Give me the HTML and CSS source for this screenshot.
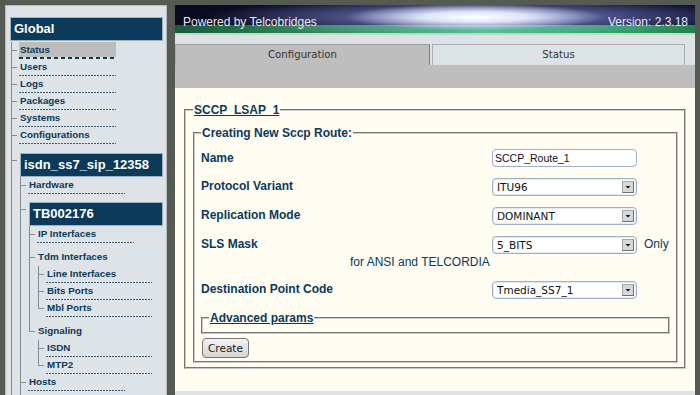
FILE: index.html
```html
<!DOCTYPE html>
<html lang="en">
<head>
    <meta charset="UTF-8">
    <meta name="viewport" content="width=device-width, initial-scale=1.0">
    <title>SCCP Route - Telcobridges</title>
    <link rel="stylesheet" href="styles.css">
</head>
<body>
    <div class="page">
        <nav class="sidebar">
            <div class="node-title">Global</div>
            <ul class="tree top">
                <li><a href="#" class="current">Status</a></li>
                <li><a href="#">Users</a></li>
                <li><a href="#">Logs</a></li>
                <li><a href="#">Packages</a></li>
                <li><a href="#">Systems</a></li>
                <li><a href="#">Configurations</a></li>
                <li class="node open">
                    <div class="node-title">isdn_ss7_sip_12358</div>
                    <ul class="tree">
                        <li><a href="#">Hardware</a></li>
                        <li class="node sub">
                            <div class="node-title">TB002176</div>
                            <ul class="tree">
                                <li><a href="#">IP Interfaces</a></li>
                                <li class="branch">
                                    <span class="branch-label">Tdm Interfaces</span>
                                    <ul class="tree wide">
                                        <li><a href="#">Line Interfaces</a></li>
                                        <li><a href="#">Bits Ports</a></li>
                                        <li><a href="#">Mbl Ports</a></li>
                                    </ul>
                                </li>
                                <li class="branch">
                                    <span class="branch-label">Signaling</span>
                                    <ul class="tree wide">
                                        <li><a href="#">ISDN</a></li>
                                        <li><a href="#">MTP2</a></li>
                                    </ul>
                                </li>
                            </ul>
                        </li>
                        <li class="open"><a href="#">Hosts</a></li>
                    </ul>
                </li>
            </ul>
        </nav>

        <main class="main">
            <header class="banner">
                <span>Powered by Telcobridges</span>
                <span>Version: 2.3.18</span>
            </header>
            <div class="tabs">
                <a href="#" class="tab active">Configuration</a>
                <a href="#" class="tab">Status</a>
            </div>
            <div class="toolbar"></div>
            <div class="content">
                <fieldset class="group">
                    <legend><a href="#">SCCP_LSAP_1</a></legend>
                    <fieldset class="group">
                        <legend>Creating New Sccp Route:</legend>
                        <form id="route-form">
                            <div class="row first">
                                <label for="name">Name</label>
                                <div class="control">
                                    <input type="text" id="name" name="name" value="SCCP_Route_1">
                                </div>
                            </div>
                            <div class="row">
                                <label for="variant">Protocol Variant</label>
                                <div class="control">
                                    <span class="select">
                                        <select id="variant" name="variant">
                                            <option>ITU96</option>
                                            <option>ANSI88</option>
                                        </select>
                                        <span class="arrow"><svg width="10" height="10" viewBox="0 0 10 10"><polygon points="2.5,4 7.5,4 5,6.5" fill="#111"/></svg></span>
                                    </span>
                                </div>
                            </div>
                            <div class="row">
                                <label for="replication">Replication Mode</label>
                                <div class="control">
                                    <span class="select">
                                        <select id="replication" name="replication">
                                            <option>DOMINANT</option>
                                            <option>LOADSHARE</option>
                                        </select>
                                        <span class="arrow"><svg width="10" height="10" viewBox="0 0 10 10"><polygon points="2.5,4 7.5,4 5,6.5" fill="#111"/></svg></span>
                                    </span>
                                </div>
                            </div>
                            <div class="row">
                                <label for="sls">SLS Mask</label>
                                <div class="control">
                                    <span class="select">
                                        <select id="sls" name="sls">
                                            <option>5_BITS</option>
                                            <option>8_BITS</option>
                                        </select>
                                        <span class="arrow"><svg width="10" height="10" viewBox="0 0 10 10"><polygon points="2.5,4 7.5,4 5,6.5" fill="#111"/></svg></span>
                                    </span>
                                    <span class="hint">Only</span>
                                </div>
                                <div class="note">for ANSI and TELCORDIA</div>
                            </div>
                            <div class="row last">
                                <label for="dpc">Destination Point Code</label>
                                <div class="control">
                                    <span class="select">
                                        <select id="dpc" name="dpc">
                                            <option>Tmedia_SS7_1</option>
                                        </select>
                                        <span class="arrow"><svg width="10" height="10" viewBox="0 0 10 10"><polygon points="2.5,4 7.5,4 5,6.5" fill="#111"/></svg></span>
                                    </span>
                                </div>
                            </div>
                        </form>
                        <fieldset class="group advanced">
                            <legend><a href="#">Advanced params</a></legend>
                        </fieldset>
                        <button type="submit" form="route-form">Create</button>
                    </fieldset>
                </fieldset>
            </div>
        </main>
    </div>
</body>
</html>
```

FILE: styles.css
```css
/* Telcobridges web portal */
body {
    margin: 0;
    background-color: #555a53;
    font-family: "Liberation Sans", Arial, sans-serif;
}

.page {
    display: flex;
    gap: 8px;
    height: 395px;
    padding: 5px 5px 0;
    box-sizing: border-box;
    overflow: hidden;
}

/* Sidebar tree */
.sidebar {
    width: 162px;
    flex-shrink: 0;
    box-sizing: border-box;
    background-color: #dde3e6;
    border: 1px solid #b4bcc0;
    border-bottom: none;
    padding: 11px 3px 0 0;
}

.node-title {
    height: 24px;
    box-sizing: border-box;
    margin-left: 4px;
    padding-left: 3px;
    background-color: #0b3a5a;
    border: 1px solid #9fb0bd;
    color: #fff;
    font-weight: bold;
    font-size: 13px;
    line-height: 22px;
    white-space: nowrap;
}

.tree {
    list-style: none;
    margin: 0 0 0 1px;
    padding: 0;
}

.tree.top {
    margin: 1px 0 0 5px;
}

.tree li {
    --tick: 8px;
    position: relative;
    padding-left: 8px;
}

.tree li::before {
    content: '';
    position: absolute;
    left: 0;
    top: 0;
    width: 5px;
    height: var(--tick);
    border-left: 1px solid #868c90;
    border-bottom: 1px solid #868c90;
}

.tree li::after {
    content: '';
    position: absolute;
    left: 0;
    top: var(--tick);
    bottom: 0;
    border-left: 1px solid #868c90;
}

.tree li:last-child::after {
    display: none;
}

/* branch continues below the visible part */
.tree li.open::after,
.tree li.open:last-child::after {
    display: block;
    bottom: -20px;
}

.tree li.node {
    --tick: 16px;
    padding-top: 9px;
}

.tree li.node.sub {
    --tick: 15px;
    padding-top: 8px;
}

.tree li .node-title {
    margin-left: 1px;
}

.tree li.branch {
    --tick: 14px;
    padding-top: 6px;
}

.tree a,
.branch-label {
    display: block;
    width: 97px;
    height: 17px;
    box-sizing: border-box;
    padding-left: 1px;
    color: #0b3a5a;
    font-weight: bold;
    font-size: 9.8px;
    line-height: 16px;
    text-decoration: none;
    white-space: nowrap;
}

.tree a {
    background: repeating-linear-gradient(to right, #3f5c76 0 2px, transparent 2px 3px) left bottom / 100% 1px no-repeat;
}

.tree.wide a {
    width: 106px;
}

.tree a.current {
    background:
        linear-gradient(#bdbdbd, #bdbdbd) left top / 100% 15px no-repeat,
        repeating-linear-gradient(to right, #0b3a5a 0 4px, transparent 4px 7px) left bottom / 100% 2px no-repeat;
}

/* Main area */
.main {
    flex: 1;
    display: flex;
    flex-direction: column;
    background-color: #dde3e5;
}

.banner {
    height: 30px;
    box-sizing: border-box;
    display: flex;
    justify-content: space-between;
    padding: 10px 7px 0 8px;
    color: #e4e9f2;
    font-size: 12px;
    line-height: 14px;
    background:
        radial-gradient(ellipse 130px 13px at 300px 12px, rgba(255, 255, 255, 1) 0%, rgba(236, 240, 255, 0.9) 40%, rgba(200, 210, 255, 0) 100%),
        radial-gradient(ellipse 270px 19px at 300px 12px, rgba(150, 160, 240, 0.85), rgba(70, 70, 170, 0)),
        linear-gradient(#c8d6d0, #c8d6d0) 0 28px / 100% 2px no-repeat,
        linear-gradient(to right, #1b5a3e, #2f9a5c 35%, #48c87e 60%, #2ba35e 85%, #21834c) 0 20px / 100% 8px no-repeat,
        linear-gradient(to right, #0a0a1e, #14143a 60%, #101032);
}

.tabs {
    display: flex;
    padding-top: 9px;
}

.tab {
    height: 21px;
    box-sizing: border-box;
    text-align: center;
    color: #333;
    font-family: "DejaVu Sans", sans-serif;
    font-size: 10.2px;
    line-height: 20px;
    text-decoration: none;
}

.tab.active {
    width: 255px;
    background-color: #bebebe;
    border-top: 1px solid #9c9c9c;
    border-left: 1px solid #a9a9a9;
    border-right: 1px solid #7e7e7e;
}

.tab:not(.active) {
    width: 253px;
    margin-left: 2px;
    border: 1px solid #a9adb0;
    border-bottom: none;
}

.toolbar {
    height: 23px;
    background-color: #bebebe;
}

.content {
    height: 303px;
    box-sizing: border-box;
    padding: 15px 9px 0;
    background-color: #fffcf2;
}

/* Form groups */
.group {
    margin: 0;
    padding: 9px 6px 4px 7px;
    border: 2px groove #c8c8c8;
}

.group .group {
    padding: 9px 6px 3px 6px;
}

legend {
    padding: 0 1px;
    color: #0b3a5a;
    font-weight: bold;
    font-size: 12px;
    line-height: 14px;
}

legend a {
    color: #0b3a5a;
}

.group .group.advanced {
    margin: 0 0 4px;
    padding: 0 6px 7px;
}

.row {
    display: grid;
    grid-template-columns: 149px 142px auto;
    align-items: center;
    row-gap: 2px;
    margin-bottom: 11px;
}

.row.first {
    margin-bottom: 10px;
}

.row.last {
    margin-bottom: 13px;
}

.row label {
    grid-column: 1;
    color: #0b3a5a;
    font-weight: bold;
    font-size: 12px;
    line-height: 14px;
}

.control {
    grid-column: 3;
    display: flex;
    align-items: center;
    gap: 7px;
}

.hint,
.note {
    color: #0b3a5a;
    font-size: 12px;
    line-height: 14px;
}

.note {
    grid-column: 2 / 4;
}

input[type="text"] {
    width: 145px;
    height: 18px;
    box-sizing: border-box;
    margin: 0;
    padding: 0 2px;
    border: 1px solid #9fb1c4;
    border-radius: 4px;
    background: #fff;
    color: #111;
    font-family: "Liberation Sans", Arial, sans-serif;
    font-size: 10.5px;
    line-height: 16px;
}

.select {
    position: relative;
    display: inline-block;
    height: 18px;
}

select {
    appearance: none;
    -webkit-appearance: none;
    width: 145px;
    height: 18px;
    box-sizing: border-box;
    margin: 0;
    padding: 0 16px 0 4px;
    border: 1px solid #9fb1c4;
    border-radius: 4px;
    box-shadow: inset 0 0 0 1px #e3eaf1;
    background: #fff;
    color: #111;
    font-family: "DejaVu Sans", sans-serif;
    font-size: 10.5px;
    line-height: 16px;
}

.arrow {
    position: absolute;
    right: 3px;
    top: 4px;
    width: 12px;
    height: 12px;
    box-sizing: border-box;
    display: flex;
    align-items: center;
    justify-content: center;
    background-color: #d8d8d8;
    border: 1px solid #a6a6a6;
    border-right-color: #6f6f6f;
    border-bottom-color: #6f6f6f;
    pointer-events: none;
}

button {
    height: 20px;
    margin-left: 1px;
    padding: 0 5px;
    border: 1px solid #767676;
    border-radius: 4px;
    background: linear-gradient(#f3f3f3, #d5d5d5);
    color: #222;
    font-family: "DejaVu Sans", sans-serif;
    font-size: 10.5px;
    cursor: pointer;
}
```
